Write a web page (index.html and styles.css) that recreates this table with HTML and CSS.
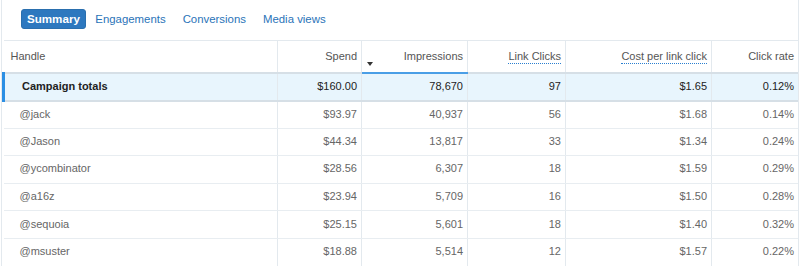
FILE: index.html
```html
<!DOCTYPE html>
<html>
<head>
<meta charset="utf-8">
<link rel="stylesheet" href="styles.css">
</head>
<body>
<div class="panel">
  <nav class="tabs">
    <span class="tab active">Summary</span>
    <span class="tab">Engagements</span>
    <span class="tab">Conversions</span>
    <span class="tab">Media views</span>
  </nav>
  <table class="grid">
    <colgroup>
      <col class="c-handle"><col class="c-spend"><col class="c-impr"><col class="c-clicks"><col class="c-cost"><col class="c-rate">
    </colgroup>
    <thead>
      <tr>
        <th class="left">Handle</th>
        <th>Spend</th>
        <th class="sorted"><span class="caret"></span>Impressions</th>
        <th><span class="dotted">Link Clicks</span></th>
        <th><span class="dotted">Cost per link click</span></th>
        <th>Click rate</th>
      </tr>
    </thead>
    <tbody>
      <tr class="totals">
        <td class="left">Campaign totals</td>
        <td>$160.00</td><td>78,670</td><td>97</td><td>$1.65</td><td>0.12%</td>
      </tr>
      <tr><td class="left">@jack</td><td>$93.97</td><td>40,937</td><td>56</td><td>$1.68</td><td>0.14%</td></tr>
      <tr><td class="left">@Jason</td><td>$44.34</td><td>13,817</td><td>33</td><td>$1.34</td><td>0.24%</td></tr>
      <tr><td class="left">@ycombinator</td><td>$28.56</td><td>6,307</td><td>18</td><td>$1.59</td><td>0.29%</td></tr>
      <tr><td class="left">@a16z</td><td>$23.94</td><td>5,709</td><td>16</td><td>$1.50</td><td>0.28%</td></tr>
      <tr><td class="left">@sequoia</td><td>$25.15</td><td>5,601</td><td>18</td><td>$1.40</td><td>0.32%</td></tr>
      <tr><td class="left">@msuster</td><td>$18.88</td><td>5,514</td><td>12</td><td>$1.57</td><td>0.22%</td></tr>
    </tbody>
  </table>
</div>
</body>
</html>
```
FILE: styles.css
```css
html, body {
  margin: 0;
  padding: 0;
  background: #fff;
  height: 100%;
}
body {
  font-family: "Liberation Sans", Arial, sans-serif;
  font-size: 11px;
  color: #666;
}
.panel {
  margin: 0 1px;
  border-left: 1px solid #e3e9ee;
  border-right: 1px solid #e3e9ee;
  min-height: 100%;
  box-sizing: border-box;
}
.tabs {
  display: flex;
  align-items: center;
  height: 40px;
  padding: 0 0 2px 19px;
  box-sizing: border-box;
}
.tab {
  font-size: 11.4px;
  color: #2a73b8;
  line-height: 20px;
  padding: 0 8.5px;
}
.tab.active {
  background: #2d78bf;
  color: #fff;
  font-weight: bold;
  font-size: 11.6px;
  border-radius: 3px;
  padding: 0 5px;
  margin-right: 1px;
  border: 1px solid #2a6fae;
  line-height: 18px;
}
.grid {
  width: 100%;
  border-collapse: collapse;
  table-layout: fixed;
}
.c-handle { width: 274px; }
.c-spend { width: 84px; }
.c-impr { width: 106px; }
.c-clicks { width: 98px; }
.c-cost { width: 146px; }
.c-rate { width: auto; }
.grid th, .grid td {
  text-align: right;
  padding: 0 4px 0 6px;
  border-left: 1px solid #e3e9ee;
  white-space: nowrap;
}
.grid th:first-child, .grid td:first-child { border-left: none; }
.grid th {
  font-weight: normal;
  color: #555;
  height: 32px;
  border-top: 1px solid #e3e9ee;
  border-bottom: 2px solid #d6dfe6;
  vertical-align: top;
  padding-top: 9px;
  box-sizing: border-box;
  position: relative;
}
.grid th.left { text-align: left; padding-left: 7px; }
.grid th.sorted { border-bottom-color: #4a9ee6; }
.caret {
  position: absolute;
  left: 5px;
  top: 21px;
  width: 0;
  height: 0;
  border-left: 3px solid transparent;
  border-right: 3px solid transparent;
  border-top: 4px solid #333;
}
.dotted {
  border-bottom: 1px dotted #2a7fd0;
  padding-bottom: 1px;
}
.grid td {
  height: 27.6px;
  box-sizing: border-box;
  border-bottom: 1px solid #e8edf1;
  vertical-align: middle;
  padding-bottom: 2px;
}
.grid td.left {
  text-align: left;
  padding-left: 16px;
}
.grid tr.totals td {
  background: #e8f5fd;
  color: #222;
  border-bottom: 2px solid #d6dfe6;
  height: 28px;
}
.grid tr.totals td.left {
  font-weight: bold;
  padding-left: 17px;
  border-left: 3px solid #2b8fe4;
}
```
